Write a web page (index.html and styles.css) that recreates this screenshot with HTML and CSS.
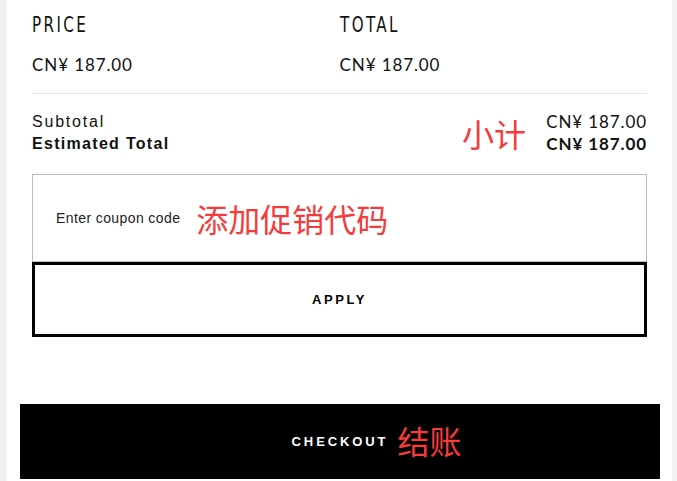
FILE: index.html
```html
<!DOCTYPE html>
<html lang="zh">
<head>
    <meta charset="utf-8">
    <link rel="stylesheet" href="styles.css">
    <title>Cart summary</title>
</head>
<body>
    <div class="panel">
        <div class="cols">
            <div class="col">
                <h3 class="col-title">PRICE</h3>
                <div class="money">CN¥ 187.00</div>
            </div>
            <div class="col">
                <h3 class="col-title">TOTAL</h3>
                <div class="money">CN¥ 187.00</div>
            </div>
        </div>

        <div class="summary">
            <div class="summary-labels">
                <div class="label">Subtotal</div>
                <div class="label bold">Estimated Total</div>
            </div>
            <span class="note note-sum">小计</span>
            <div class="summary-values">
                <div class="money">CN¥ 187.00</div>
                <div class="money bold">CN¥ 187.00</div>
            </div>
        </div>

        <form class="coupon">
            <div class="coupon-field">
                <span class="placeholder">Enter coupon code</span>
                <span class="note">添加促销代码</span>
            </div>
            <button class="apply" type="button">APPLY</button>
        </form>

        <button class="checkout" type="button">
            <span class="checkout-text">CHECKOUT<span class="note note-pay">结账</span></span>
        </button>
    </div>
</body>
</html>
```

FILE: styles.css
```css
html {
    height: 100%;
    margin: 0;
    padding: 0;
}

body {
    margin: 0;
    background: #f1f2f3;
    font-family: "Lato", "Liberation Sans", sans-serif;
    color: #111;
}

.panel {
    margin: 0 5px 0 7px;
    padding: 0 25px;
    background: #fff;
    height: 481px;
    overflow: hidden;
    box-sizing: border-box;
}

.cols {
    display: grid;
    grid-template-columns: 1fr 1fr;
    padding-top: 14px;
    padding-bottom: 17px;
    border-bottom: 1px solid #e6e6e6;
}

.col-title {
    margin: 0;
    font-family: "DejaVu Sans Condensed", "DejaVu Sans", sans-serif;
    font-stretch: condensed;
    font-weight: normal;
    font-size: 21px;
    line-height: 22px;
    letter-spacing: 3px;
    color: #111;
    transform: scaleX(0.8);
    transform-origin: left center;
}

.money {
    font-size: 17px;
    line-height: 22px;
    letter-spacing: 0.9px;
}

.cols .money {
    margin-top: 18px;
}

.summary {
    display: flex;
    align-items: flex-start;
    padding: 17px 0 19px;
}

.summary-labels {
    flex: 1;
}

.label {
    font-family: "Liberation Sans", sans-serif;
    font-size: 16px;
    line-height: 22px;
    letter-spacing: 1.8px;
}

.label.bold {
    letter-spacing: 1.3px;
}

.bold {
    font-weight: bold;
}

.summary-values {
    text-align: right;
}

.note {
    font-family: "Noto Sans CJK SC", sans-serif;
    font-size: 32px;
    line-height: 36px;
    color: #f53b3b;
    font-weight: normal;
    letter-spacing: 0;
    white-space: nowrap;
}

.note-sum {
    margin: 4px 20px 0 0;
}

.coupon {
    margin: 0;
}

.coupon-field {
    display: flex;
    align-items: center;
    gap: 16px;
    height: 86px;
    padding-left: 23px;
    border: 1px solid #bdbdbd;
}

.placeholder {
    font-family: "Liberation Sans", sans-serif;
    font-size: 14px;
    letter-spacing: 0.4px;
    color: #222;
}

.apply {
    display: block;
    width: 100%;
    height: 75px;
    background: #fff;
    border: 3px solid #000;
    font-family: "Liberation Sans", sans-serif;
    font-weight: bold;
    font-size: 13px;
    letter-spacing: 2.6px;
    color: #000;
}

.checkout {
    display: flex;
    align-items: center;
    justify-content: center;
    width: calc(100% + 25px);
    margin: 67px -13px 0 -12px;
    height: 75px;
    background: #000;
    border: none;
    color: #fff;
    font-family: "Liberation Sans", sans-serif;
    font-weight: bold;
    font-size: 13px;
    letter-spacing: 2.9px;
}

.checkout-text {
    position: relative;
}

.note-pay {
    position: absolute;
    left: 100%;
    top: -12px;
    margin-left: 9px;
}
```
